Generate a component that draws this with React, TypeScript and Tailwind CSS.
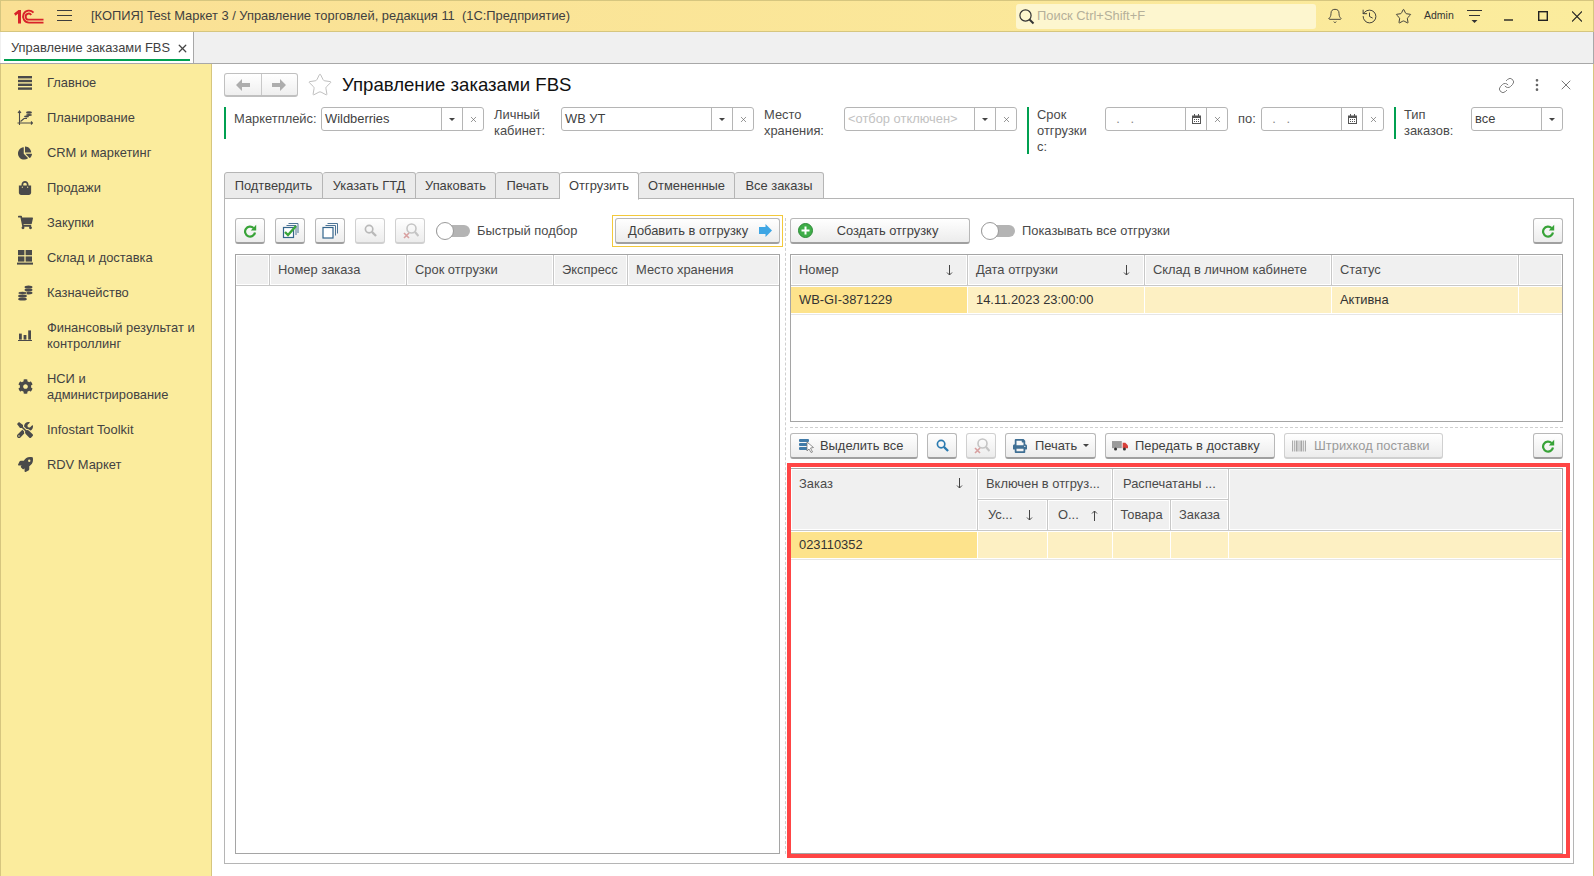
import type { ReactNode } from "react";
import { Bell, History, Star, Link, EllipsisVertical, X } from "lucide-react";
import { FaChartPie, FaShoppingBag, FaShoppingCart, FaCog, FaTools, FaRocket, FaPrint } from "react-icons/fa";

const Logo = () => (
  <svg width="30" height="15" viewBox="0 0 30 15" fill="none" className="shrink-0">
    <path d="M0 4.5 L4.5 1 H7 V14.5 H4 V4.8 L1.5 6.8 Z" fill="#d8232a" />
    <path d="M19.5 3.6 A6 6 0 1 0 15 13.6 H29.5" stroke="#d8232a" strokeWidth="1.9" />
    <path d="M17.2 6 A3 3 0 1 0 15 10.6 H29.5" stroke="#d8232a" strokeWidth="1.9" />
  </svg>
);

const LinesIcon = () => (
  <svg width="14" height="14" viewBox="0 0 14 14" fill="#4a4a4a">
    <rect y="0" width="14" height="2.4" />
    <rect y="3.8" width="14" height="2.4" />
    <rect y="7.6" width="14" height="2.4" />
    <rect y="11.4" width="14" height="2.4" />
  </svg>
);

const PlanIcon = () => (
  <svg width="16" height="16" viewBox="0 0 16 16" fill="none" stroke="#4a4a4a">
    <path d="M2.5 1 V15 M0.5 13 H15.5 M1 3 L2.5 1 L4 3 M14 11.5 L15.5 13 L14 14.5" strokeWidth="1.1" />
    <path d="M3.5 11.5 L7 8.5 H10" strokeWidth="1.2" />
    <ellipse cx="12" cy="2.5" rx="3" ry="1.3" fill="#4a4a4a" stroke="none" />
    <ellipse cx="12" cy="5" rx="3" ry="1.1" fill="#4a4a4a" stroke="none" />
    <ellipse cx="9.5" cy="6.5" rx="2.5" ry="1.1" fill="#4a4a4a" stroke="none" />
  </svg>
);

const StoreIcon = () => (
  <svg width="16" height="15" viewBox="0 0 16 15" fill="#4a4a4a">
    <rect x="1" y="0" width="6.4" height="5.2" />
    <rect x="8.6" y="0" width="6.4" height="5.2" />
    <rect x="1" y="6.4" width="6.4" height="5.2" />
    <rect x="8.6" y="6.4" width="6.4" height="5.2" />
    <rect x="0" y="12.6" width="16" height="2" />
  </svg>
);

const CoinsIcon = () => (
  <svg width="15" height="16" viewBox="0 0 15 16" fill="#4a4a4a">
    <ellipse cx="10.5" cy="2" rx="4" ry="1.6" />
    <ellipse cx="10.5" cy="5" rx="4" ry="1.4" />
    <ellipse cx="10.5" cy="8" rx="4" ry="1.4" />
    <ellipse cx="4.5" cy="8" rx="4.4" ry="1.6" stroke="#fbec9d" strokeWidth="0.6" />
    <ellipse cx="4.5" cy="11" rx="4.4" ry="1.5" />
    <ellipse cx="4.5" cy="14" rx="4.4" ry="1.6" />
  </svg>
);

const BarsIcon = () => (
  <svg width="14" height="11" viewBox="0 0 14 11" fill="#4a4a4a">
    <rect x="1" y="3.6" width="2.8" height="6" />
    <rect x="5.6" y="5" width="2.8" height="4.6" />
    <rect x="10.2" y="0.4" width="2.8" height="9.2" />
    <rect y="10" width="14" height="1" />
  </svg>
);

const sideItems: { label: ReactNode; icon: ReactNode; tall?: boolean }[] = [
  { label: "Главное", icon: <LinesIcon /> },
  { label: "Планирование", icon: <PlanIcon /> },
  { label: "CRM и маркетинг", icon: <FaChartPie size={14} color="#4a4a4a" /> },
  { label: "Продажи", icon: <FaShoppingBag size={14} color="#4a4a4a" /> },
  { label: "Закупки", icon: <FaShoppingCart size={15} color="#4a4a4a" /> },
  { label: "Склад и доставка", icon: <StoreIcon /> },
  { label: "Казначейство", icon: <CoinsIcon /> },
  { label: <>Финансовый результат и<br />контроллинг</>, icon: <BarsIcon />, tall: true },
  { label: <>НСИ и<br />администрирование</>, icon: <FaCog size={15} color="#4a4a4a" />, tall: true },
  { label: "Infostart Toolkit", icon: <FaTools size={16} color="#4a4a4a" /> },
  { label: "RDV Маркет", icon: <FaRocket size={15} color="#4a4a4a" /> },
];

const Sidebar = () => (
  <aside className="w-[212px] shrink-0 bg-[#fbec9d] border-l border-r border-[#d6c67f] pt-px">
    {sideItems.map((item, i) => (
      <div key={i} className={`flex items-center ${item.tall ? "h-[51px]" : "h-[35px]"}`}>
        <div className="w-[46px] pl-[15px] pr-[13px] shrink-0 flex justify-center">{item.icon}</div>
        <div className="leading-[16px] text-[#424242]">{item.label}</div>
      </div>
    ))}
  </aside>
);

const TitleBar = () => (
  <div className="h-[32px] shrink-0 flex items-center bg-linear-to-r from-[#fae094] to-[#fbec9d] border border-[#d6c67f] pr-[11px]">
    <div className="ml-[13px]"><Logo /></div>
    <svg width="15" height="12" viewBox="0 0 15 12" stroke="#3d3d3d" className="ml-[13px]">
      <path d="M0 .5 H15 M0 5.5 H15 M0 10.5 H15" />
    </svg>
    <div className="ml-[19px] text-[#3f3f3f] whitespace-pre">[КОПИЯ] Test Маркет 3 / Управление торговлей, редакция 11  (1С:Предприятие)</div>
    <div className="ml-auto w-[300px] h-[25px] rounded-[3px] bg-[#fdf6cf] flex items-center pl-[2px] text-[#b5b09a]">
      <svg width="17" height="17" viewBox="0 0 17 17" fill="none" stroke="#333">
        <circle cx="7.5" cy="7.5" r="5.6" strokeWidth="1.2" />
        <path d="M11.5 11.5 L15.5 15.5" strokeWidth="2" />
      </svg>
      <span className="ml-[2px]">Поиск Ctrl+Shift+F</span>
    </div>
    <Bell size={16} strokeWidth={1.3} color="#333" className="ml-[11px]" />
    <History size={17} strokeWidth={1.3} color="#333" className="ml-[18px]" />
    <Star size={17} strokeWidth={1.3} color="#333" className="ml-[17px]" />
    <span className="ml-[12px] w-[29px] text-[10.5px] text-[#333]">Admin</span>
    <svg width="15" height="16" viewBox="0 0 15 16" className="ml-[14px]" stroke="#333">
      <path d="M0 2.5 H15 M2 7.5 H13" />
      <path d="M4.5 12 H10.5 L7.5 15 Z" fill="#333" stroke="none" />
    </svg>
    <svg width="9" height="10" viewBox="0 0 9 10" stroke="#222" strokeWidth="1.4" className="ml-[22px]">
      <path d="M0 9 H9" />
    </svg>
    <svg width="10" height="10" viewBox="0 0 10 10" fill="none" stroke="#222" strokeWidth="1.4" className="ml-[25px]">
      <rect x=".7" y=".7" width="8.6" height="8.6" />
    </svg>
    <svg width="10" height="11" viewBox="0 0 10 11" stroke="#222" strokeWidth="1.1" className="ml-[24px]">
      <path d="M0 .5 L10 10.5 M10 .5 L0 10.5" />
    </svg>
  </div>
);

const OpenTabs = () => (
  <div className="h-[32px] shrink-0 flex bg-[#f0f0f0] border-b border-r border-[#a8a8a8]">
    <div className="w-[193px] ml-px bg-white border-r border-[#a8a8a8] px-[3px] pt-[7px]">
      <div className="flex items-center h-[18px] pl-[7px] pr-[1px] justify-between text-[#3f3f3f]">
        <span>Управление заказами FBS</span>
        <X size={13} strokeWidth={2.4} color="#444" />
      </div>
      <div className="h-[2px] bg-[#00a050] mt-[2px]" />
    </div>
  </div>
);

type FieldProps = { w: string; value?: string; muted?: boolean; date?: boolean; clear?: boolean };

const Caret = () => <span className="w-0 h-0 border-x-[3px] border-x-transparent border-t-[3px] border-t-[#444]" />;

const Field = ({ w, value, muted, date, clear = true }: FieldProps) => (
  <div className={`${w} h-[24px] shrink-0 flex border border-[#b5b5b5] rounded-[3px] bg-white`}>
    <div className={`flex-1 min-w-0 pl-[3px] leading-[21px] whitespace-pre ${muted ? "text-[#c2c2c2]" : date ? "text-[#888]" : "text-[#3f3f3f]"}`}>{value}</div>
    <div className="w-[21px] border-l border-[#b5b5b5] flex items-center justify-center">
      {date ? (
        <svg width="9" height="10" viewBox="0 0 9 10" fill="#555">
          <path d="M0 1.5 H2 V0 H3 V1.5 H6 V0 H7 V1.5 H9 V10 H0 Z M1 4 V9 H8 V4 Z" />
          <path d="M2 5 H3 V6 H2 Z M4 5 H5 V6 H4 Z M6 5 H7 V6 H6 Z M2 7 H3 V8 H2 Z M4 7 H5 V8 H4 Z M6 7 H7 V8 H6 Z" />
        </svg>
      ) : (
        <Caret />
      )}
    </div>
    {clear && (
      <div className="w-[21px] border-l border-[#b5b5b5] flex items-center justify-center">
        <X size={9} strokeWidth={1.8} color="#666" />
      </div>
    )}
  </div>
);

const Label = ({ w, children, ml }: { w: string; children: ReactNode; ml?: string }) => (
  <div className={`${w} ${ml ?? ""} shrink-0 leading-[16px] text-[#4a4a4a]`}>{children}</div>
);

const FilterBar = ({ h }: { h: string }) => <div className={`w-[2px] ${h} bg-[#00a050] shrink-0`} />;

const Filters = () => (
  <div className="flex items-start h-[47px] mt-[10px] pl-[12px] shrink-0">
    <FilterBar h="h-[32px]" />
    <Label w="w-[87px]" ml="ml-[8px] pt-[4px]">Маркетплейс:</Label>
    <Field w="w-[163px]" value="Wildberries" />
    <Label w="w-[67px]" ml="ml-[10px]">Личный кабинет:</Label>
    <Field w="w-[193px]" value="WB УТ" />
    <Label w="w-[80px]" ml="ml-[10px]">Место хранения:</Label>
    <Field w="w-[173px]" value="<отбор отключен>" muted />
    <div className="w-[10px] shrink-0" />
    <FilterBar h="h-[47px]" />
    <Label w="w-[68px]" ml="ml-[8px]">Срок<br />отгрузки<br />с:</Label>
    <Field w="w-[123px]" value="  .   ." date />
    <Label w="w-[23px]" ml="ml-[10px] pt-[4px]">по:</Label>
    <Field w="w-[123px]" value="  .   ." date />
    <div className="w-[10px] shrink-0" />
    <FilterBar h="h-[32px]" />
    <Label w="w-[67px]" ml="ml-[8px]">Тип заказов:</Label>
    <Field w="w-[92px]" value="все" clear={false} />
  </div>
);

const tabs = [
  { t: "Подтвердить", w: "w-[99px]" },
  { t: "Указать ГТД", w: "w-[93px]" },
  { t: "Упаковать", w: "w-[80px]" },
  { t: "Печать", w: "w-[64px]" },
  { t: "Отгрузить", w: "w-[79px]", active: true },
  { t: "Отмененные", w: "w-[96px]" },
  { t: "Все заказы", w: "w-[89px]" },
];

const Tabs = () => (
  <div className="flex h-[27px] mt-[18px] ml-[12px] relative z-10 shrink-0">
    {tabs.map((tab) => (
      <div
        key={tab.t}
        className={`${tab.w} shrink-0 border border-l-0 first:border-l border-[#b5b5b5] rounded-t-[3px] text-center text-[#3f3f3f] leading-[25px] ${
          tab.active ? "bg-white border-b-white h-[28px]" : "bg-[#ebebeb] h-[27px]"
        }`}
      >
        {tab.t}
      </div>
    ))}
  </div>
);

const Btn = ({ w, children, disabled, className }: { w?: string; children: ReactNode; disabled?: boolean; className?: string }) => (
  <div
    className={`${w ?? ""} ${className ?? ""} h-[26px] shrink-0 flex items-center justify-center rounded-[3px] border border-b-2 bg-linear-to-b from-white to-[#ececec] whitespace-nowrap ${
      disabled ? "border-[#d0d0d0] text-[#9a9a9a]" : "border-[#b8b8b8] border-b-[#a0a0a0] text-[#3f3f3f]"
    }`}
  >
    {children}
  </div>
);

const Refresh = () => (
  <Btn w="w-[30px]">
    <svg width="14" height="14" viewBox="0 0 14 14" fill="none">
      <path d="M10.6 4 A5 5 0 1 0 12 8.5" stroke="#38a338" strokeWidth="2.2" />
      <path d="M13.2 .8 V6.4 H7.8 Z" fill="#38a338" />
    </svg>
  </Btn>
);

const Toggle = ({ label, ml }: { label: string; ml: string }) => (
  <div className={`flex items-center ${ml}`}>
    <div className="relative w-[34px] h-[18px] flex items-center">
      <div className="w-full h-[12px] rounded-full bg-[#b4b4b4]" />
      <div className="absolute left-0 top-0 w-[18px] h-[18px] rounded-full bg-white border border-[#9a9a9a]" />
    </div>
    <span className="ml-[7px] text-[#4a4a4a]">{label}</span>
  </div>
);

const Magnifier = ({ color = "#b9b9b9" }: { color?: string }) => (
  <svg width="13" height="13" viewBox="0 0 14 14" fill="none" stroke={color}>
    <circle cx="5.5" cy="5.5" r="4" strokeWidth="1.8" />
    <path d="M8.5 8.5 L13 13" strokeWidth="2.4" />
  </svg>
);

const MagnifierOff = () => (
  <svg width="17" height="17" viewBox="0 0 17 17" fill="none">
    <circle cx="9.5" cy="6.5" r="4.5" stroke="#c4c4c4" strokeWidth="1.6" />
    <path d="M13 10 L16.5 14" stroke="#c4c4c4" strokeWidth="2.2" />
    <path d="M2 11 L7 16 M7 11 L2 16" stroke="#d8a0a0" strokeWidth="1.6" />
  </svg>
);

const HCell = ({ w, children, arrow, className }: { w?: string; children?: ReactNode; arrow?: "down" | "up"; className?: string }) => (
  <div className={`${w ?? ""} ${className ?? ""} h-full min-w-0 bg-[#f0f0f0] border-r border-[#c8c8c8] shadow-[inset_-1px_0_0_#fff,inset_1px_0_0_#fff,inset_0_1px_0_#fff,inset_0_-1px_0_#fff] flex items-center justify-between pl-[8px] ${arrow ? "pr-[14px]" : "pr-[4px]"} text-[#4a4a4a] whitespace-nowrap`}>
    <span>{children}</span>
    {arrow === "down" && <svg width="7" height="11" viewBox="0 0 7 11" stroke="#444" fill="none" className="shrink-0"><path d="M3.5 0 V10 M1 7.5 L3.5 10 L6 7.5" /></svg>}
    {arrow === "up" && <svg width="7" height="11" viewBox="0 0 7 11" stroke="#444" fill="none" className="shrink-0"><path d="M3.5 11 V1 M1 3.5 L3.5 1 L6 3.5" /></svg>}
  </div>
);

const LeftPane = () => (
  <div className="w-[545px] flex flex-col shrink-0">
    <div className="h-[26px] flex items-center gap-[10px] shrink-0">
      <Refresh />
      <Btn w="w-[30px]">
        <svg width="17" height="16" viewBox="0 0 17 16" fill="none">
          <path d="M6.5 .5 H16 V10 M4.5 2.5 H14 V12" stroke="#4e7596" />
          <rect x="1.5" y="4.5" width="10" height="10" fill="#fff" stroke="#33658c" strokeWidth="1.2" />
          <path d="M3 9 L6 12 L14 3" stroke="#3aa53a" strokeWidth="2.4" />
        </svg>
      </Btn>
      <Btn w="w-[30px]">
        <svg width="16" height="16" viewBox="0 0 16 16" fill="none" stroke="#4e7596">
          <path d="M5.5 .5 H15.5 V10.5 M3.5 2.5 H13.5 V12.5" />
          <rect x="1" y="4.5" width="10" height="10.5" fill="#fff" stroke="#33658c" strokeWidth="1.2" />
        </svg>
      </Btn>
      <Btn w="w-[30px]" disabled><Magnifier /></Btn>
      <Btn w="w-[30px]" disabled><MagnifierOff /></Btn>
      <Toggle label="Быстрый подбор" ml="ml-px" />
      <div className="ml-auto -mr-[3px] border border-[#f3c93b] p-[2px] -my-[3px]">
        <Btn w="w-[165px]" className="pl-[12px] pr-[7px] !justify-between">
          <span>Добавить в отгрузку</span>
          <svg width="13" height="13" viewBox="0 0 13 13" fill="#3ea6e4"><path d="M0 3 H6.5 V0 L13 6.5 L6.5 13 V10 H0 Z" /></svg>
        </Btn>
      </div>
    </div>
    <div className="mt-[10px] flex-1 border border-[#a5a5a5] bg-white">
      <div className="h-[31px] flex border-b border-[#c8c8c8]">
        <HCell w="w-[34px]" />
        <HCell w="w-[137px]">Номер заказа</HCell>
        <HCell w="w-[147px]">Срок отгрузки</HCell>
        <HCell w="w-[74px]">Экспресс</HCell>
        <HCell className="flex-1 !border-r-0">Место хранения</HCell>
      </div>
    </div>
  </div>
);

const UpperTable = () => (
  <div className="h-[168px] border border-[#a5a5a5] bg-white shrink-0">
    <div className="h-[31px] flex border-b border-[#c8c8c8]">
      <HCell w="w-[177px]" arrow="down">Номер</HCell>
      <HCell w="w-[177px]" arrow="down">Дата отгрузки</HCell>
      <HCell w="w-[187px]">Склад в личном кабинете</HCell>
      <HCell w="w-[187px]">Статус</HCell>
      <HCell className="flex-1 !border-r-0" />
    </div>
    <div className="h-[29px] py-px border-b border-[#e6e6e6]">
      <div className="h-[26px] flex text-[#333] leading-[26px]">
        <div className="w-[177px] bg-[#fde38c] pl-[8px] border-r border-white">WB-GI-3871229</div>
        <div className="w-[177px] bg-[#fdf0c3] pl-[8px] border-r border-white">14.11.2023 23:00:00</div>
        <div className="w-[187px] bg-[#fdf0c3] border-r border-white" />
        <div className="w-[187px] bg-[#fdf0c3] pl-[8px] border-r border-white">Активна</div>
        <div className="flex-1 bg-[#fdf0c3]" />
      </div>
    </div>
  </div>
);

const LowerTable = () => (
  <div className="flex-1 mr-[3px] mt-px border-t border-b border-r border-[#a5a5a5] bg-white">
    <div className="grid grid-cols-[187px_70px_65px_58px_58px_1fr] grid-rows-[31px_30px] border-b border-[#c8c8c8] h-[62px]">
      <div className="row-span-2"><HCell arrow="down" className="!items-start pt-[5px] [&>svg]:mt-[4px]">Заказ</HCell></div>
      <div className="col-span-2 border-b border-[#c8c8c8]"><HCell>Включен в отгруз...</HCell></div>
      <div className="col-span-2 border-b border-[#c8c8c8]"><HCell className="!pl-[10px]">Распечатаны ...</HCell></div>
      <div className="row-span-2"><HCell className="!border-r-0" /></div>
      <HCell arrow="down" className="!pl-[10px]">Ус...</HCell>
      <HCell arrow="up" className="!pl-[10px]">О...</HCell>
      <HCell className="!justify-center !px-0">Товара</HCell>
      <HCell className="!justify-center !px-0">Заказа</HCell>
    </div>
    <div className="h-[29px] py-px border-b border-[#e6e6e6]">
      <div className="h-[26px] grid grid-cols-[187px_70px_65px_58px_58px_1fr] text-[#333] leading-[26px]">
        <div className="bg-[#fde38c] pl-[8px] border-r border-white">023110352</div>
        <div className="bg-[#fdf0c3] border-r border-white" />
        <div className="bg-[#fdf0c3] border-r border-white" />
        <div className="bg-[#fdf0c3] border-r border-white" />
        <div className="bg-[#fdf0c3] border-r border-white" />
        <div className="bg-[#fdf0c3]" />
      </div>
    </div>
  </div>
);

const RightPane = () => (
  <div className="w-[773px] flex flex-col shrink-0 -mb-[4px]">
    <div className="h-[26px] flex items-center shrink-0">
      <Btn w="w-[180px]" className="relative">
        <svg width="15" height="15" viewBox="0 0 15 15" className="absolute left-[7px] top-[4px]">
          <circle cx="7.5" cy="7.5" r="7" fill="#3fae49" stroke="#2d8a36" />
          <path d="M7.5 3.5 V11.5 M3.5 7.5 H11.5" stroke="#fff" strokeWidth="2" />
        </svg>
        <span className="ml-[15px]">Создать отгрузку</span>
      </Btn>
      <Toggle label="Показывать все отгрузки" ml="ml-[11px]" />
      <div className="ml-auto"><Refresh /></div>
    </div>
    <div className="mt-[10px] shrink-0"><UpperTable /></div>
    <div className="mt-[5px] border-t border-dashed border-[#cfcfcf] pt-[5px] h-[36px] shrink-0">
      <div className="h-[26px] flex items-center gap-[9px]">
        <Btn w="w-[128px]" className="!justify-start pl-[7px]">
          <svg width="17" height="15" viewBox="0 0 17 15" className="mr-[5px]">
            <rect x="1" y="1" width="10" height="3" rx="1" fill="#3f7aa8" />
            <rect x="1" y="5" width="10" height="3" rx="1" fill="#3f7aa8" />
            <rect x="1" y="9" width="10" height="3" rx="1" fill="#3f7aa8" />
            <path d="M9 4 L15.5 9.5 L12.5 10 L14.5 14 L13 14.5 L11 11 L9 13 Z" fill="#fff" stroke="#777" strokeWidth=".8" />
          </svg>
          Выделить все
        </Btn>
        <Btn w="w-[30px]"><Magnifier color="#2a7ab0" /></Btn>
        <Btn w="w-[30px]" disabled><MagnifierOff /></Btn>
        <Btn w="w-[91px]" className="!justify-start pl-[7px]">
          <FaPrint size={14} color="#3f6f94" className="mr-[8px]" />
          Печать
          <span className="ml-[6px] flex"><Caret /></span>
        </Btn>
        <Btn w="w-[170px]" className="!justify-start pl-[6px]">
          <svg width="16" height="11" viewBox="0 0 18 12" className="mr-[7px]">
            <rect x="0" y="1" width="11" height="8" fill="#9a9a9a" />
            <path d="M12 3 H15 L18 6 V9 H12 Z" fill="#d8403a" />
            <circle cx="4" cy="10" r="1.7" fill="#333" />
            <circle cx="14" cy="10" r="1.7" fill="#333" />
          </svg>
          Передать в доставку
        </Btn>
        <Btn w="w-[159px]" disabled className="!justify-start pl-[7px]">
          <svg width="14" height="12" viewBox="0 0 15 12" className="mr-[8px]" fill="#a5a5a5">
            <path d="M0 0 H1 V12 H0 Z M2 0 H3 V12 H2 Z M4 0 H6 V12 H4 Z M7 0 H8 V12 H7 Z M9 0 H11 V12 H9 Z M12 0 H13 V12 H12 Z M14 0 H15 V12 H14 Z" />
          </svg>
          Штрихкод поставки
        </Btn>
        <div className="ml-auto"><Refresh /></div>
      </div>
    </div>
    {/* red frame from the original annotated screenshot */}
    <div className="-ml-[3px] w-[783px] h-[395px] shrink-0 border-4 border-[#ff4545] flex">
      <LowerTable />
    </div>
  </div>
);

const Page = () => (
  <main className="flex-1 min-w-0 bg-white flex flex-col border-r border-[#d6c67f]">
    <div className="flex items-center h-[24px] mt-[9px] pl-[12px] pr-[19px] shrink-0">
      <div className="w-[74px] h-[24px] flex rounded-[3px] border border-b-2 border-[#c0c0c0] bg-linear-to-b from-white to-[#efefef]">
        <div className="flex-1 flex items-center justify-center border-r border-[#c8c8c8]">
          <svg width="14" height="12" viewBox="0 0 14 12" fill="#adadad"><path d="M0 6 L6 0 V4 H14 V8 H6 V12 Z" /></svg>
        </div>
        <div className="flex-1 flex items-center justify-center">
          <svg width="14" height="12" viewBox="0 0 14 12" fill="#adadad"><path d="M14 6 L8 0 V4 H0 V8 H8 V12 Z" /></svg>
        </div>
      </div>
      <Star size={26} strokeWidth={0.8} color="#b5b5b5" className="ml-[9px]" />
      <h1 className="ml-[9px] text-[18.6px] text-[#111] leading-[24px]">Управление заказами FBS</h1>
      <Link size={17} strokeWidth={1.2} color="#666" className="ml-auto" />
      <EllipsisVertical size={16} strokeWidth={2} color="#666" className="ml-[14px]" />
      <X size={16} strokeWidth={1.2} color="#555" className="ml-[13px]" />
    </div>
    <Filters />
    <Tabs />
    <div className="ml-[12px] mr-[19px] h-[666px] -mt-px border border-[#b5b5b5] pt-[19px] pl-[10px] pb-[9px] flex shrink-0">
      <LeftPane />
      <div className="w-[10px] shrink-0 flex justify-center">
        <div className="h-full border-l border-dashed border-[#cfcfcf]" />
      </div>
      <RightPane />
    </div>
  </main>
);

export default function App() {
  return (
    <div className="w-[1594px] h-[876px] overflow-hidden flex flex-col bg-white text-[12.9px] font-['Liberation_Sans',Arial,sans-serif]">
      <TitleBar />
      <OpenTabs />
      <div className="flex flex-1 min-h-0">
        <Sidebar />
        <Page />
      </div>
    </div>
  );
}
